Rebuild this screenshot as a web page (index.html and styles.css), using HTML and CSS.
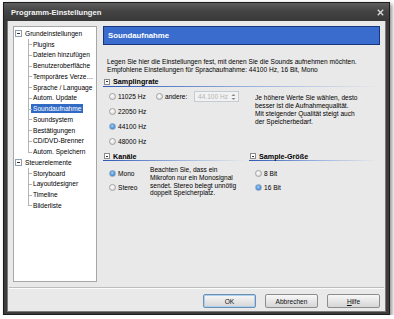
FILE: index.html
```html
<!DOCTYPE html>
<html lang="de">
<head>
<meta charset="utf-8">
<title>Programm-Einstellungen</title>
<link rel="stylesheet" href="styles.css">
</head>
<body>
<div class="window">
  <div class="titlebar">
    <span class="title">Programm-Einstellungen</span>
    <svg class="close" width="7" height="7" viewBox="0 0 7 7"><path d="M0.8 0.8 L6.2 6.2 M6.2 0.8 L0.8 6.2" stroke="#d8d8d8" stroke-width="1.4"/></svg>
  </div>
  <div class="client">
    <div class="main">
      <div class="tree">
        <div class="root"><span class="exp"></span>Grundeinstellungen</div>
        <div class="kids">
          <div class="kid"><span>Plugins</span></div>
          <div class="kid"><span>Dateien hinzufügen</span></div>
          <div class="kid"><span>Benutzeroberfläche</span></div>
          <div class="kid"><span>Temporäres Verze…</span></div>
          <div class="kid"><span>Sprache / Language</span></div>
          <div class="kid"><span>Autom. Update</span></div>
          <div class="kid sel"><span>Soundaufnahme</span></div>
          <div class="kid"><span>Soundsystem</span></div>
          <div class="kid"><span>Bestätigungen</span></div>
          <div class="kid"><span>CD/DVD-Brenner</span></div>
          <div class="kid"><span>Autom. Speichern</span></div>
        </div>
        <div class="root"><span class="exp"></span>Steuerelemente</div>
        <div class="kids">
          <div class="kid"><span>Storyboard</span></div>
          <div class="kid"><span>Layoutdesigner</span></div>
          <div class="kid"><span>Timeline</span></div>
          <div class="kid"><span>Bilderliste</span></div>
        </div>
      </div>
      <div class="panel">
        <div class="phead">Soundaufnahme</div>
        <div class="desc">Legen Sie hier die Einstellungen fest, mit denen Sie die Sounds aufnehmen möchten.<br>Empfohlene Einstellungen für Sprachaufnahme: 44100 Hz, 16 Bit, Mono</div>
        <div class="shead"><span class="sbox"></span>Samplingrate</div>
        <div class="samp">
          <div class="col1">
            <div class="opt"><span class="radio"></span>11025 Hz</div>
            <div class="opt"><span class="radio"></span>22050 Hz</div>
            <div class="opt"><span class="radio on"></span>44100 Hz</div>
            <div class="opt"><span class="radio"></span>48000 Hz</div>
          </div>
          <div class="col2">
            <div class="opt"><span class="radio"></span><span class="andere">andere:</span>
              <div class="spin"><span class="spinval">44.100 Hz</span>
                <svg class="arrows" width="5" height="8" viewBox="0 0 5 8"><path d="M0.5 3 L2.5 1 L4.5 3 Z M0.5 5 L2.5 7 L4.5 5 Z" fill="#8a8a8a"/></svg>
              </div>
            </div>
          </div>
          <div class="note">Je höhere Werte Sie wählen, desto<br>besser ist die Aufnahmequalität.<br>Mit steigender Qualität steigt auch<br>der Speicherbedarf.</div>
        </div>
        <div class="lower">
          <div class="kan">
            <div class="shead short"><span class="sbox"></span>Kanäle</div>
            <div class="kbody">
              <div class="kradios">
                <div class="opt2"><span class="radio on"></span>Mono</div>
                <div class="opt2"><span class="radio"></span>Stereo</div>
              </div>
              <div class="knote">Beachten Sie, dass ein<br>Mikrofon nur ein Monosignal<br>sendet. Stereo belegt unnötig<br>doppelt Speicherplatz.</div>
            </div>
          </div>
          <div class="sg">
            <div class="shead short"><span class="sbox"></span>Sample-Größe</div>
            <div class="sgbody">
              <div class="opt2"><span class="radio"></span>8 Bit</div>
              <div class="opt2"><span class="radio on"></span>16 Bit</div>
            </div>
          </div>
        </div>
      </div>
    </div>
    <div class="sep"></div>
    <div class="buttons">
      <button class="btn default">OK</button>
      <button class="btn">Abbrechen</button>
      <button class="btn"><u>H</u>ilfe</button>
    </div>
  </div>
</div>
</body>
</html>
```
FILE: styles.css
```css
html, body {
  margin: 0;
  padding: 0;
  background: #ffffff;
}
body {
  font-family: "Liberation Sans", Arial, sans-serif;
  font-size: 6.6px;
  color: #000;
}
.window {
  margin: 2px 0 0 3px;
  width: 385px;
  border: 1px solid #1c1c1c;
  background: #3c3c3c;
  display: flex;
  flex-direction: column;
  box-shadow: 2px 2px 4px rgba(0,0,0,0.45);
}
.titlebar {
  height: 18px;
  background: linear-gradient(#5e5e5e, #444 45%, #383838);
  display: flex;
  align-items: center;
  justify-content: space-between;
  padding: 0 5px 0 7px;
}
.title {
  color: #f4f4f4;
  font-weight: bold;
  font-size: 7.6px;
}
.close {
  display: block;
}
.client {
  margin: 0 3px 2px;
  background: #e9e9e9;
  padding: 5px 5px 3px;
  display: flex;
  flex-direction: column;
  border: 1px solid #7a7a7a;
  border-top: none;
}
.main {
  display: flex;
  gap: 6px;
  height: 256px;
}
.tree {
  width: 84px;
  box-sizing: border-box;
  background: #fff;
  border: 1px solid #a7a7a7;
  padding-top: 1px;
}
.root {
  height: 10.75px;
  display: flex;
  align-items: center;
  padding-left: 1px;
}
.exp {
  width: 7px;
  height: 7px;
  box-sizing: border-box;
  border: 1px solid #8f9fb1;
  background: #fff;
  margin-right: 3px;
  display: flex;
  align-items: center;
  justify-content: center;
}
.exp::after {
  content: "";
  width: 3px;
  height: 1px;
  background: #333;
}
.kid {
  height: 10.75px;
  display: flex;
  align-items: center;
  padding-left: 19px;
  position: relative;
  white-space: nowrap;
}
.kid::before {
  content: "";
  position: absolute;
  left: 14px;
  top: 0;
  bottom: 0;
  width: 1px;
  background: #b4b4b4;
}
.kid:last-child::before {
  bottom: 50%;
}
.kid::after {
  content: "";
  position: absolute;
  left: 14px;
  top: 50%;
  width: 4px;
  height: 1px;
  background: #b4b4b4;
}
.kid span {
  display: inline-block;
  line-height: 9px;
  padding: 0 2px;
  margin-left: -2px;
}
.kid.sel span {
  background: #316ac5;
  color: #fff;
}
.panel {
  flex: 1;
  display: flex;
  flex-direction: column;
  white-space: nowrap;
}
.phead {
  height: 19px;
  box-sizing: border-box;
  background: #3a6cce;
  border: 1px solid #17367c;
  color: #fff;
  font-weight: bold;
  font-size: 7.8px;
  display: flex;
  align-items: center;
  padding-left: 4px;
}
.desc {
  margin-top: 13px;
  padding-left: 4px;
  line-height: 8px;
}
.shead {
  margin-top: 2px;
  height: 11px;
  box-sizing: border-box;
  display: flex;
  align-items: center;
  padding-left: 1px;
  font-weight: bold;
  font-size: 7.2px;
  background: linear-gradient(to right, #2c57b4, #9db4e0 55%, rgba(233,233,233,0)) left bottom / 100% 1px no-repeat;
}
.shead.short {
  height: 10px;
}
.sbox {
  width: 6px;
  height: 6px;
  box-sizing: border-box;
  border: 1px solid #8a8a8a;
  background: #fff;
  margin-right: 3px;
  display: flex;
  align-items: center;
  justify-content: center;
}
.sbox::after {
  content: "";
  width: 2px;
  height: 1px;
  background: #333;
}
.samp {
  display: flex;
  margin-top: 2px;
}
.col1 {
  width: 47px;
  padding-left: 6px;
}
.opt {
  height: 15px;
  display: flex;
  align-items: center;
}
.radio {
  width: 7px;
  height: 7px;
  box-sizing: border-box;
  border-radius: 50%;
  border: 1px solid #a2a2a2;
  background: radial-gradient(circle at 40% 35%, #ffffff, #dedede 70%, #cfcfcf);
  margin-right: 2px;
  flex: none;
}
.radio.on {
  border-color: #8aa6c4;
  background: radial-gradient(circle at 45% 40%, #a9d3f7, #4d93de 55%, #3c7cc8);
}
.andere {
  width: 29px;
}
.spin {
  width: 45px;
  height: 11px;
  box-sizing: border-box;
  border: 1px solid #c4ccd4;
  background: #f2f2f2;
  display: flex;
  align-items: center;
  justify-content: space-between;
  padding: 0 2px 0 3px;
}
.spinval {
  color: #b4b4b4;
}
.arrows {
  display: block;
}
.note {
  margin-left: 16px;
  margin-top: 5px;
  line-height: 8px;
}
.lower {
  display: flex;
}
.kan {
  width: 143px;
  margin-right: 3px;
}
.sg {
  flex: 1;
  margin-right: 3px;
}
.kbody {
  display: flex;
  padding-top: 5px;
}
.kradios {
  width: 41px;
  padding-left: 6px;
}
.opt2 {
  height: 14px;
  display: flex;
  align-items: center;
}
.knote {
  line-height: 7.8px;
}
.sgbody {
  padding-top: 5px;
  padding-left: 6px;
}
.sep {
  margin: 5px -4px 0;
  height: 1px;
  background: #bdbdbd;
  border-bottom: 1px solid #fbfbfb;
}
.buttons {
  display: flex;
  justify-content: flex-end;
  gap: 9px;
  margin-top: 5px;
}
.btn {
  width: 53px;
  height: 14px;
  box-sizing: border-box;
  border: 1px solid #8d8d8d;
  border-radius: 2px;
  background: linear-gradient(#f8f8f8, #e6e6e6 50%, #d6d6d6);
  font-family: "Liberation Sans", Arial, sans-serif;
  font-size: 6.6px;
  color: #111;
  padding: 0;
}
.btn.default {
  border-color: #6f8fb0;
  box-shadow: inset 0 0 0 1px #a9d0f0;
}
```
